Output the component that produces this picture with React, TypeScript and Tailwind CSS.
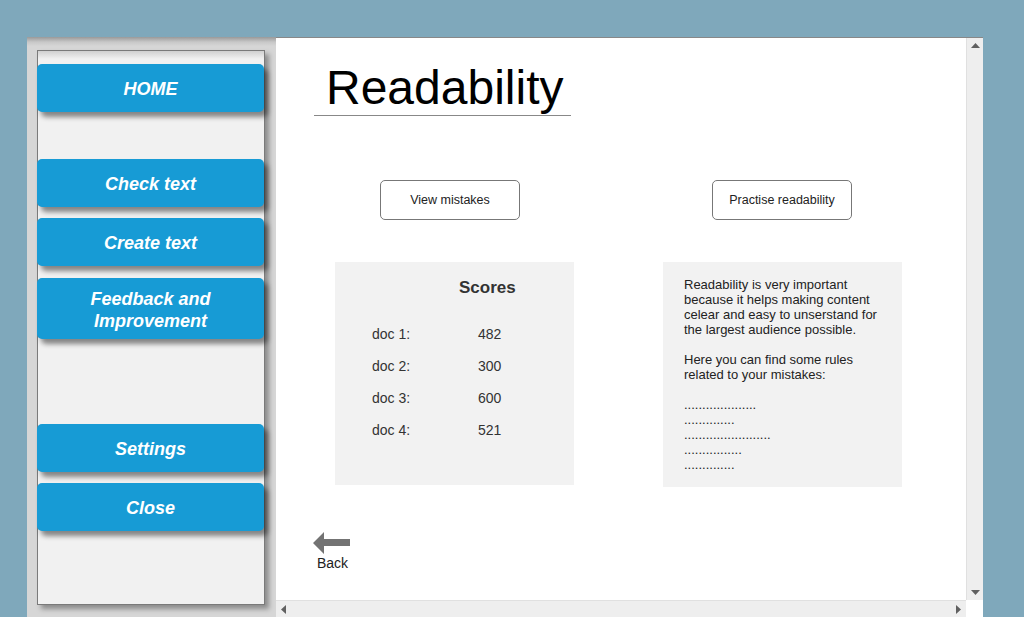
import React from "react";

function NavButton({ label, h = 48 }: { label: React.ReactNode; h?: number }) {
  return (
    <div
      className="w-[227px] -ml-px rounded-[5px] bg-[#179bd5] text-white italic font-bold text-[18px] leading-[22px] pt-[2px] flex items-center justify-center text-center shadow-[4px_5px_5px_rgba(0,0,0,0.45)]"
      style={{ height: h }}
    >
      {label}
    </div>
  );
}

export default function App() {
  return (
    <div
      className="w-[1024px] h-[617px] bg-[#7fa8bb] overflow-hidden pt-[37px] pl-[27px]"
      style={{ fontFamily: '"Liberation Sans", Arial, sans-serif' }}
    >
      <div className="flex w-[956px] h-[580px]">
        {/* Sidebar */}
        <div className="w-[249px] h-full bg-[#d6d6d6] bg-[linear-gradient(#999_0px,#c8c8c8_5px,#d6d6d6_9px)] pl-[10px] pt-[13px]">
          <div className="w-[228px] h-[555px] bg-[#f1f1f1] border border-[#7a7a7a] shadow-[4px_4px_5px_rgba(0,0,0,0.35)] bg-[linear-gradient(#d0d0d0_0px,#f1f1f1_8px)] pt-[13px] flex flex-col">
            <NavButton label="HOME" />
            <div className="h-[47px]" />
            <NavButton label="Check text" />
            <div className="h-[11px]" />
            <NavButton label="Create text" />
            <div className="h-[12px]" />
            <NavButton h={61} label={<span>Feedback and<br />Improvement</span>} />
            <div className="h-[85px]" />
            <NavButton label="Settings" />
            <div className="h-[11px]" />
            <NavButton label="Close" />
          </div>
        </div>

        {/* Main */}
        <div className="flex-1 flex flex-col border-t border-[#888]">
          <div className="flex flex-1 min-h-0">
            <div className="flex-1 bg-white">
              <div className="pl-[38px] pt-[24px]">
                <div className="w-[257px] border-b border-[#888] pb-[1px]">
                  <h1 className="text-[48px] leading-[52px] text-black pl-[12px]">Readability</h1>
                </div>
              </div>
              <div className="flex pt-[64px]">
                <div className="ml-[59px] w-[239px] flex flex-col">
                  <button className="ml-[45px] w-[140px] h-[40px] border border-[#777] rounded-[5px] text-[12.5px] text-[#222] bg-white">
                    View mistakes
                  </button>
                  <div className="mt-[42px] w-[239px] h-[223px] bg-[#f2f2f2] pt-[16px]">
                    <div className="pl-[124px] text-[17px] font-bold text-[#333] leading-[20px]">Scores</div>
                    <div className="pt-[26px] flex flex-col gap-[12px] text-[14px] text-[#333] leading-[20px]">
                      {[
                        ["doc 1:", "482"],
                        ["doc 2:", "300"],
                        ["doc 3:", "600"],
                        ["doc 4:", "521"],
                      ].map(([d, v]) => (
                        <div key={d} className="flex pl-[37px]">
                          <span className="w-[106px]">{d}</span>
                          <span>{v}</span>
                        </div>
                      ))}
                    </div>
                  </div>
                </div>
                <div className="ml-[89px] w-[239px] flex flex-col">
                  <button className="ml-[49px] w-[140px] h-[40px] border border-[#777] rounded-[5px] text-[12.5px] text-[#222] bg-white">
                    Practise readability
                  </button>
                  <div className="mt-[42px] w-[239px] h-[225px] bg-[#f2f2f2] pl-[21px] pr-[16px] pt-[15px] text-[13px] leading-[15px] text-[#222]">
                    <p>
                      Readability is very important because it helps making content celear and easy to unserstand for the largest
                      audience possible.
                    </p>
                    <p className="mt-[15px]">Here you can find some rules related to your mistakes:</p>
                    <div className="mt-[15px]">
                      <div>....................</div>
                      <div>..............</div>
                      <div>........................</div>
                      <div>................</div>
                      <div>..............</div>
                    </div>
                  </div>
                </div>
              </div>
              <div className="pl-[37px] pt-[45px] flex flex-col items-start">
                <svg width="37" height="22" viewBox="0 0 37 22">
                  <polygon points="0,11 11,0 11,7 37,7 37,14 11,14 11,22" fill="#737373" />
                </svg>
                <span className="ml-[4px] mt-[1px] text-[14px] leading-[16px] text-[#222]">Back</span>
              </div>
            </div>
            {/* vertical scrollbar */}
            <div className="w-[17px] bg-[#eeeeee] border-l border-[#e0e0e0] flex flex-col justify-between items-center py-[5px]">
              <svg width="9" height="5" viewBox="0 0 9 5"><polygon points="0,5 4.5,0 9,5" fill="#606060" /></svg>
              <svg width="9" height="5" viewBox="0 0 9 5"><polygon points="0,0 4.5,5 9,0" fill="#606060" /></svg>
            </div>
          </div>
          {/* horizontal scrollbar */}
          <div className="h-[17px] flex">
            <div className="flex-1 bg-[#eeeeee] border-t border-[#e0e0e0] flex justify-between items-center px-[5px]">
              <svg width="5" height="9" viewBox="0 0 5 9"><polygon points="5,0 0,4.5 5,9" fill="#606060" /></svg>
              <svg width="5" height="9" viewBox="0 0 5 9"><polygon points="0,0 5,4.5 0,9" fill="#606060" /></svg>
            </div>
            <div className="w-[17px] bg-white" />
          </div>
        </div>
      </div>
    </div>
  );
}
